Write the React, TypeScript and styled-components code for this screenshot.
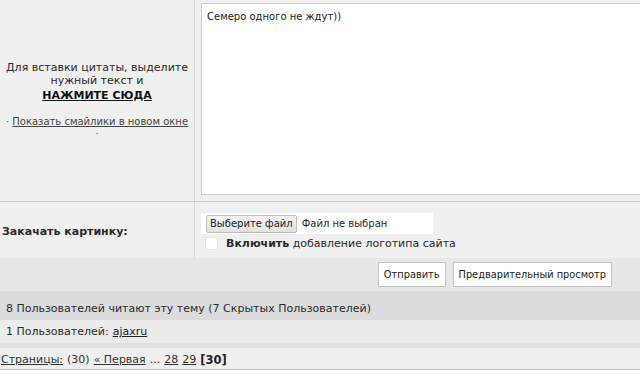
import styled, { createGlobalStyle } from 'styled-components';

const Global = createGlobalStyle`
    html, body {
        margin: 0;
        padding: 0;
        background: #fff;
        overflow: hidden;
    }
    body {
        font-family: "DejaVu Sans", Verdana, sans-serif;
        font-size: 11px;
        color: #2a2a2a;
    }
`;

const Page = styled.div`
    width: 640px;
`;

const FormGrid = styled.div`
    display: grid;
    grid-template-columns: 195px 1fr;
    background: #f0f0f0;
`;

const SideCell = styled.div<{ $border?: boolean }>`
    border-right: 1px solid #d8d8d8;
    border-bottom: ${p => (p.$border ? '1px solid #c9c9c9' : 'none')};
    display: flex;
    flex-direction: column;
    justify-content: center;
`;

const MainCell = styled.div<{ $border?: boolean }>`
    border-bottom: ${p => (p.$border ? '1px solid #c9c9c9' : 'none')};
    overflow: hidden;
`;

const QuoteHint = styled.div`
    text-align: center;
    line-height: 13px;
`;

const StrongLink = styled.a`
    display: block;
    margin-top: 2px;
    font-weight: bold;
    color: #111;
    text-decoration: underline;
`;

const Smilies = styled.div`
    text-align: center;
    margin-top: 14px;
    margin-bottom: 1px;
    line-height: 12px;
    font-size: 10px;
    color: #555;
`;

const SmileLink = styled.a`
    color: #444;
    text-decoration: underline;
`;

const EditorWrap = styled.div`
    padding: 3px 0 6px 6px;
`;

const Editor = styled.textarea`
    display: block;
    box-sizing: border-box;
    width: calc(100% + 10px);
    height: 192px;
    margin: 0;
    border: 1px solid #cdcdcd;
    border-right: none;
    background: #fff;
    resize: none;
    padding: 7px 5px;
    font-family: "DejaVu Sans", Verdana, sans-serif;
    font-size: 10px;
    color: #222;
    outline: none;
`;

const UploadLabel = styled.div`
    font-weight: bold;
    padding-left: 2px;
    padding-top: 2px;
`;

const UploadArea = styled.div`
    height: 56px;
    padding: 11px 0 0 6px;
    box-sizing: border-box;
`;

const FileBox = styled.div`
    display: flex;
    align-items: center;
    gap: 5px;
    width: 232px;
    height: 21px;
    box-sizing: border-box;
    background: #fff;
    padding: 0 5px;
    font-size: 10px;
`;

const FileButton = styled.button`
    height: 18px;
    padding: 0 3px;
    border: 1px solid #bdbdbd;
    border-radius: 2px;
    background: linear-gradient(#f6f6f6, #e2e2e2);
    font-family: "DejaVu Sans", Verdana, sans-serif;
    font-size: 10px;
    color: #222;
`;

const CheckRow = styled.label`
    display: flex;
    align-items: center;
    gap: 8px;
    margin-top: 3px;
    padding-left: 4px;
`;

const Box = styled.span`
    width: 11px;
    height: 11px;
    border: 1px solid #e4e4e4;
    border-radius: 2px;
    background: #fff;
`;

const ButtonBar = styled.div`
    display: flex;
    justify-content: flex-end;
    gap: 7px;
    height: 33px;
    padding: 4px 28px 0 0;
    box-sizing: border-box;
    background: #e7e7e7;
`;

const ActionButton = styled.button`
    height: 25px;
    padding: 0 5px;
    border: 1px solid #c6c6c6;
    background: #fff;
    font-family: "DejaVu Sans", Verdana, sans-serif;
    font-size: 9.8px;
    color: #222;
`;

const UsersHead = styled.div`
    height: 29px;
    padding: 0 6px;
    display: flex;
    align-items: center;
    padding-top: 6px;
    box-sizing: border-box;
    background: #dcdcdc;
`;

const UsersRow = styled.div`
    height: 23px;
    padding: 0 6px;
    display: flex;
    align-items: center;
    background: #ececec;
    border-bottom: 5px solid #e2e2e2;
`;

const UserLink = styled.a`
    color: #222;
    text-decoration: underline;
    margin-left: 4px;
`;

const Pager = styled.div`
    height: 19px;
    display: flex;
    align-items: center;
    gap: 4px;
    padding-left: 1px;
    padding-top: 2px;
    background: #efefef;
    border-bottom: 1px solid #bdbdbd;
    color: #333;
`;

const PageLink = styled.a`
    color: #333;
    text-decoration: underline;
`;

const Current = styled.b`
    color: #222;
    font-size: 11.5px;
`;

export default function App() {
    return (
        <Page>
            <Global />
            <FormGrid>
                <SideCell $border>
                    <QuoteHint>
                        Для вставки цитаты, выделите
                        <br />
                        нужный текст и
                        <StrongLink>НАЖМИТЕ СЮДА</StrongLink>
                    </QuoteHint>
                    <Smilies>
                        · <SmileLink>Показать смайлики в новом окне</SmileLink>
                        <br />·
                    </Smilies>
                </SideCell>
                <MainCell $border>
                    <EditorWrap>
                        <Editor defaultValue="Семеро одного не ждут))" />
                    </EditorWrap>
                </MainCell>
                <SideCell>
                    <UploadLabel>Закачать картинку:</UploadLabel>
                </SideCell>
                <MainCell>
                    <UploadArea>
                        <FileBox>
                            <FileButton>Выберите файл</FileButton>
                            <span>Файл не выбран</span>
                        </FileBox>
                        <CheckRow>
                            <Box />
                            <span>
                                <b>Включить</b> добавление логотипа сайта
                            </span>
                        </CheckRow>
                    </UploadArea>
                </MainCell>
            </FormGrid>
            <ButtonBar>
                <ActionButton>Отправить</ActionButton>
                <ActionButton>Предварительный просмотр</ActionButton>
            </ButtonBar>
            <UsersHead>8 Пользователей читают эту тему (7 Скрытых Пользователей)</UsersHead>
            <UsersRow>
                1 Пользователей: <UserLink>ajaxru</UserLink>
            </UsersRow>
            <Pager>
                <PageLink>Страницы:</PageLink>
                <span>(30)</span>
                <PageLink>« Первая</PageLink>
                <span>...</span>
                <PageLink>28</PageLink>
                <PageLink>29</PageLink>
                <Current>[30]</Current>
            </Pager>
        </Page>
    );
}
